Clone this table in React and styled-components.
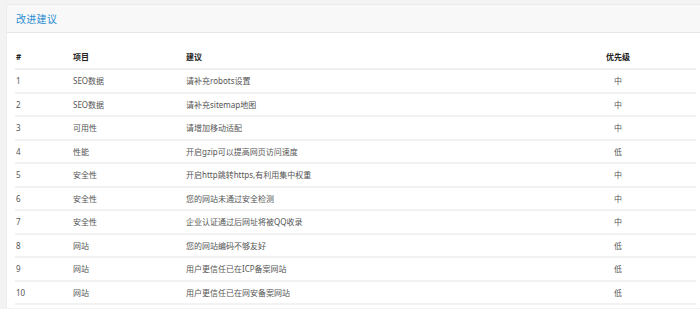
import styled, { createGlobalStyle } from "styled-components";

const GlobalStyle = createGlobalStyle`
  html, body {
    margin: 0;
    padding: 0;
    background: #f3f3f3;
    overflow: hidden;
    font-family: "Noto Sans", "Noto Sans CJK SC", sans-serif;
  }
`;

const suggestions = [
  { item: "SEO数据", text: "请补充robots设置", level: "中" },
  { item: "SEO数据", text: "请补充sitemap地图", level: "中" },
  { item: "可用性", text: "请增加移动适配", level: "中" },
  { item: "性能", text: "开启gzip可以提高网页访问速度", level: "低" },
  { item: "安全性", text: "开启http跳转https,有利用集中权重", level: "中" },
  { item: "安全性", text: "您的网站未通过安全检测", level: "中" },
  { item: "安全性", text: "企业认证通过后网址将被QQ收录", level: "中" },
  { item: "网站", text: "您的网站编码不够友好", level: "低" },
  { item: "网站", text: "用户更信任已在ICP备案网站", level: "低" },
  { item: "网站", text: "用户更信任已在网安备案网站", level: "低" },
];

export default function App() {
  return (
    <>
      <GlobalStyle />
      <Panel>
        <PanelHeading>
          <Title>改进建议</Title>
        </PanelHeading>
        <PanelBody>
          <Table>
            <colgroup>
              <col style={{ width: 57 }} />
              <col style={{ width: 113 }} />
              <col style={{ width: 355 }} />
              <col style={{ width: 156 }} />
            </colgroup>
            <thead>
              <tr>
                <HeadCell>#</HeadCell>
                <HeadCell>项目</HeadCell>
                <HeadCell>建议</HeadCell>
                <HeadCell $center>优先级</HeadCell>
              </tr>
            </thead>
            <tbody>
              {suggestions.map((s, i) => (
                <Row key={i}>
                  <Cell>{i + 1}</Cell>
                  <Cell>{s.item}</Cell>
                  <Cell>{s.text}</Cell>
                  <Cell $center>{s.level}</Cell>
                </Row>
              ))}
            </tbody>
          </Table>
        </PanelBody>
      </Panel>
    </>
  );
}

const Panel = styled.div`
  margin: 4px -10px 0 6px;
  background: #fff;
  border-left: 1px solid #ececec;
  border-top: 1px solid #ececec;
`;

const PanelHeading = styled.div`
  height: 27px;
  display: flex;
  align-items: center;
  padding-left: 9px;
  background: #f8f8f8;
  border-bottom: 1px solid #e6e6e6;
`;

const Title = styled.h3`
  margin: 0;
  font-size: 10px;
  font-weight: normal;
  color: #2a8dd2;
  letter-spacing: 0.3px;
`;

const PanelBody = styled.div`
  padding: 11px 14px 3px 8px;
`;

const Table = styled.table`
  width: 681px;
  border-collapse: collapse;
  table-layout: fixed;
  font-size: 8px;
  color: #555;
`;

const HeadCell = styled.th`
  height: 24px;
  padding: 0 1px;
  text-align: ${(p) => (p.$center ? "center" : "left")};
  font-weight: bold;
  color: #222;
  border-bottom: 2px solid #efefef;
`;

const Row = styled.tr`
  & + & td {
    border-top: 2px solid #f2f2f2;
  }
  &:last-child td {
    border-bottom: 2px solid #f2f2f2;
  }
`;

const Cell = styled.td`
  height: 21.5px;
  padding: 0 1px;
  text-align: ${(p) => (p.$center ? "center" : "left")};
  vertical-align: middle;
`;
